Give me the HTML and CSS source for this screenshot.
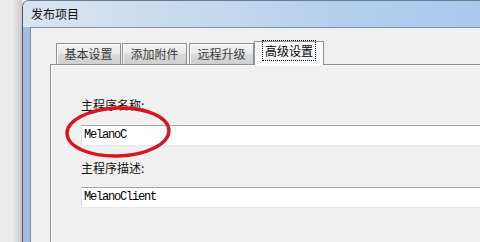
FILE: index.html
```html
<!DOCTYPE html>
<html>
<head>
  <meta charset="UTF-8">
  <title>发布项目</title>
  <link rel="stylesheet" href="styles.css">
</head>
<body>
  <div class="desk">
    <div class="desk-gutter"></div>
    <div class="window">
      <div class="title-bar">发布项目</div>
      <div class="frame">
        <div class="client">
          <div class="tabs">
            <div class="tab">基本设置</div>
            <div class="tab">添加附件</div>
            <div class="tab tab-gap">远程升级</div>
            <div class="tab active"><span class="focus">高级设置</span></div>
          </div>
          <div class="panel">
            <div class="field-label">主程序名称:</div>
            <div class="text-box">MelanoC</div>
            <div class="field-label second">主程序描述:</div>
            <div class="text-box second">MelanoClient</div>
          </div>
        </div>
      </div>
    </div>
  </div>

  <!-- hand-drawn highlight over the first field -->
  <svg class="mark" width="110" height="58" viewBox="0 0 110 58">
    <ellipse cx="53" cy="27" rx="51" ry="24" fill="none" stroke="#d8151d" stroke-width="3.4" transform="rotate(-2 53 27)"/>
  </svg>
</body>
</html>
```

FILE: styles.css
```css
body {
  margin: 0;
  padding: 0;
  width: 480px;
  height: 242px;
  overflow: hidden;
  background: #ececec;
  font-family: "Noto Sans CJK SC", "Noto Sans", sans-serif;
  font-size: 12px;
  color: #000000;
  position: relative;
}

.desk {
  display: flex;
  height: 100%;
}

.desk-gutter {
  width: 22px;
  flex-shrink: 0;
  background: linear-gradient(to right, #eeeeee 0%, #ebebeb 55%, #c9c9c9 100%);
}

.window {
  flex: 1;
  display: flex;
  flex-direction: column;
  border-left: 1px solid #4b5767;
  border-top: 1px solid #6a7a8d;
  border-top-left-radius: 7px;
  overflow: hidden;
}

/* Title bar */
.title-bar {
  height: 26px;
  line-height: 26px;
  padding-left: 8px;
  font-size: 12px;
  color: #111111;
  background: linear-gradient(to right, #d9e4f1 0%, #c6d9ee 40%, #b4cfee 70%, #a9c9ef 100%);
}

.frame {
  flex: 1;
  display: flex;
  padding-left: 7px;
  background: linear-gradient(to right, #a3bddc 0%, #c1d5ec 60%, #d3e2f3 100%);
}

.client {
  flex: 1;
  display: flex;
  flex-direction: column;
  background: #f0f0f0;
  border-left: 1px solid #7588a0;
  border-top: 1px solid #7f92aa;
  padding: 13px 0 0 19px;
}

/* Tabs */
.tabs {
  display: flex;
  align-items: flex-end;
  gap: 1px;
  padding-left: 6px;
  height: 23px;
}

.tab {
  width: 65px;
  height: 21px;
  box-sizing: border-box;
  border: 1px solid #8d9097;
  border-bottom: none;
  background: linear-gradient(to bottom, #f4f4f4 0%, #e9e9e9 45%, #d9d9d9 55%, #cfcfcf 100%);
  box-shadow: inset 1px 1px 0 #fafafa;
  color: #3a3a3a;
  text-align: center;
  line-height: 19px;
}

.tab.tab-gap {
  margin-left: 1px;
}

.tab.active {
  width: 70px;
  height: 24px;
  margin-left: -1px;
  margin-bottom: -1px;
  background: #fcfcfc;
  box-shadow: none;
  color: #000000;
  line-height: 18px;
  position: relative;
  z-index: 1;
}

.focus {
  outline: 1px dotted #000000;
  outline-offset: 1px;
  padding: 0 1px;
}

/* Panel */
.panel {
  flex: 1;
  background: #f0f0f0;
  border-left: 1px solid #8d8f92;
  border-top: 1px solid #8d8f92;
  box-shadow: inset 1px 1px 0 #fbfbfb;
  padding: 33px 0 0 30px;
}

.field-label {
  line-height: 14px;
  height: 14px;
  color: #111111;
}

.field-label.second {
  margin-top: 15px;
}

.text-box {
  margin-top: 13px;
  height: 21px;
  box-sizing: border-box;
  background: #ffffff;
  border-top: 1px solid #a4a6aa;
  border-left: 1px solid #e2e3ea;
  border-bottom: 1px solid #e3e6ea;
  padding: 0 2px 1px 2px;
  font-family: "Liberation Mono", "DejaVu Sans Mono", monospace;
  font-size: 12px;
  letter-spacing: -1.2px;
  line-height: 18px;
  color: #000000;
}

.text-box.second {
  margin-top: 12px;
}

.mark {
  position: absolute;
  left: 65px;
  top: 105px;
}
```
